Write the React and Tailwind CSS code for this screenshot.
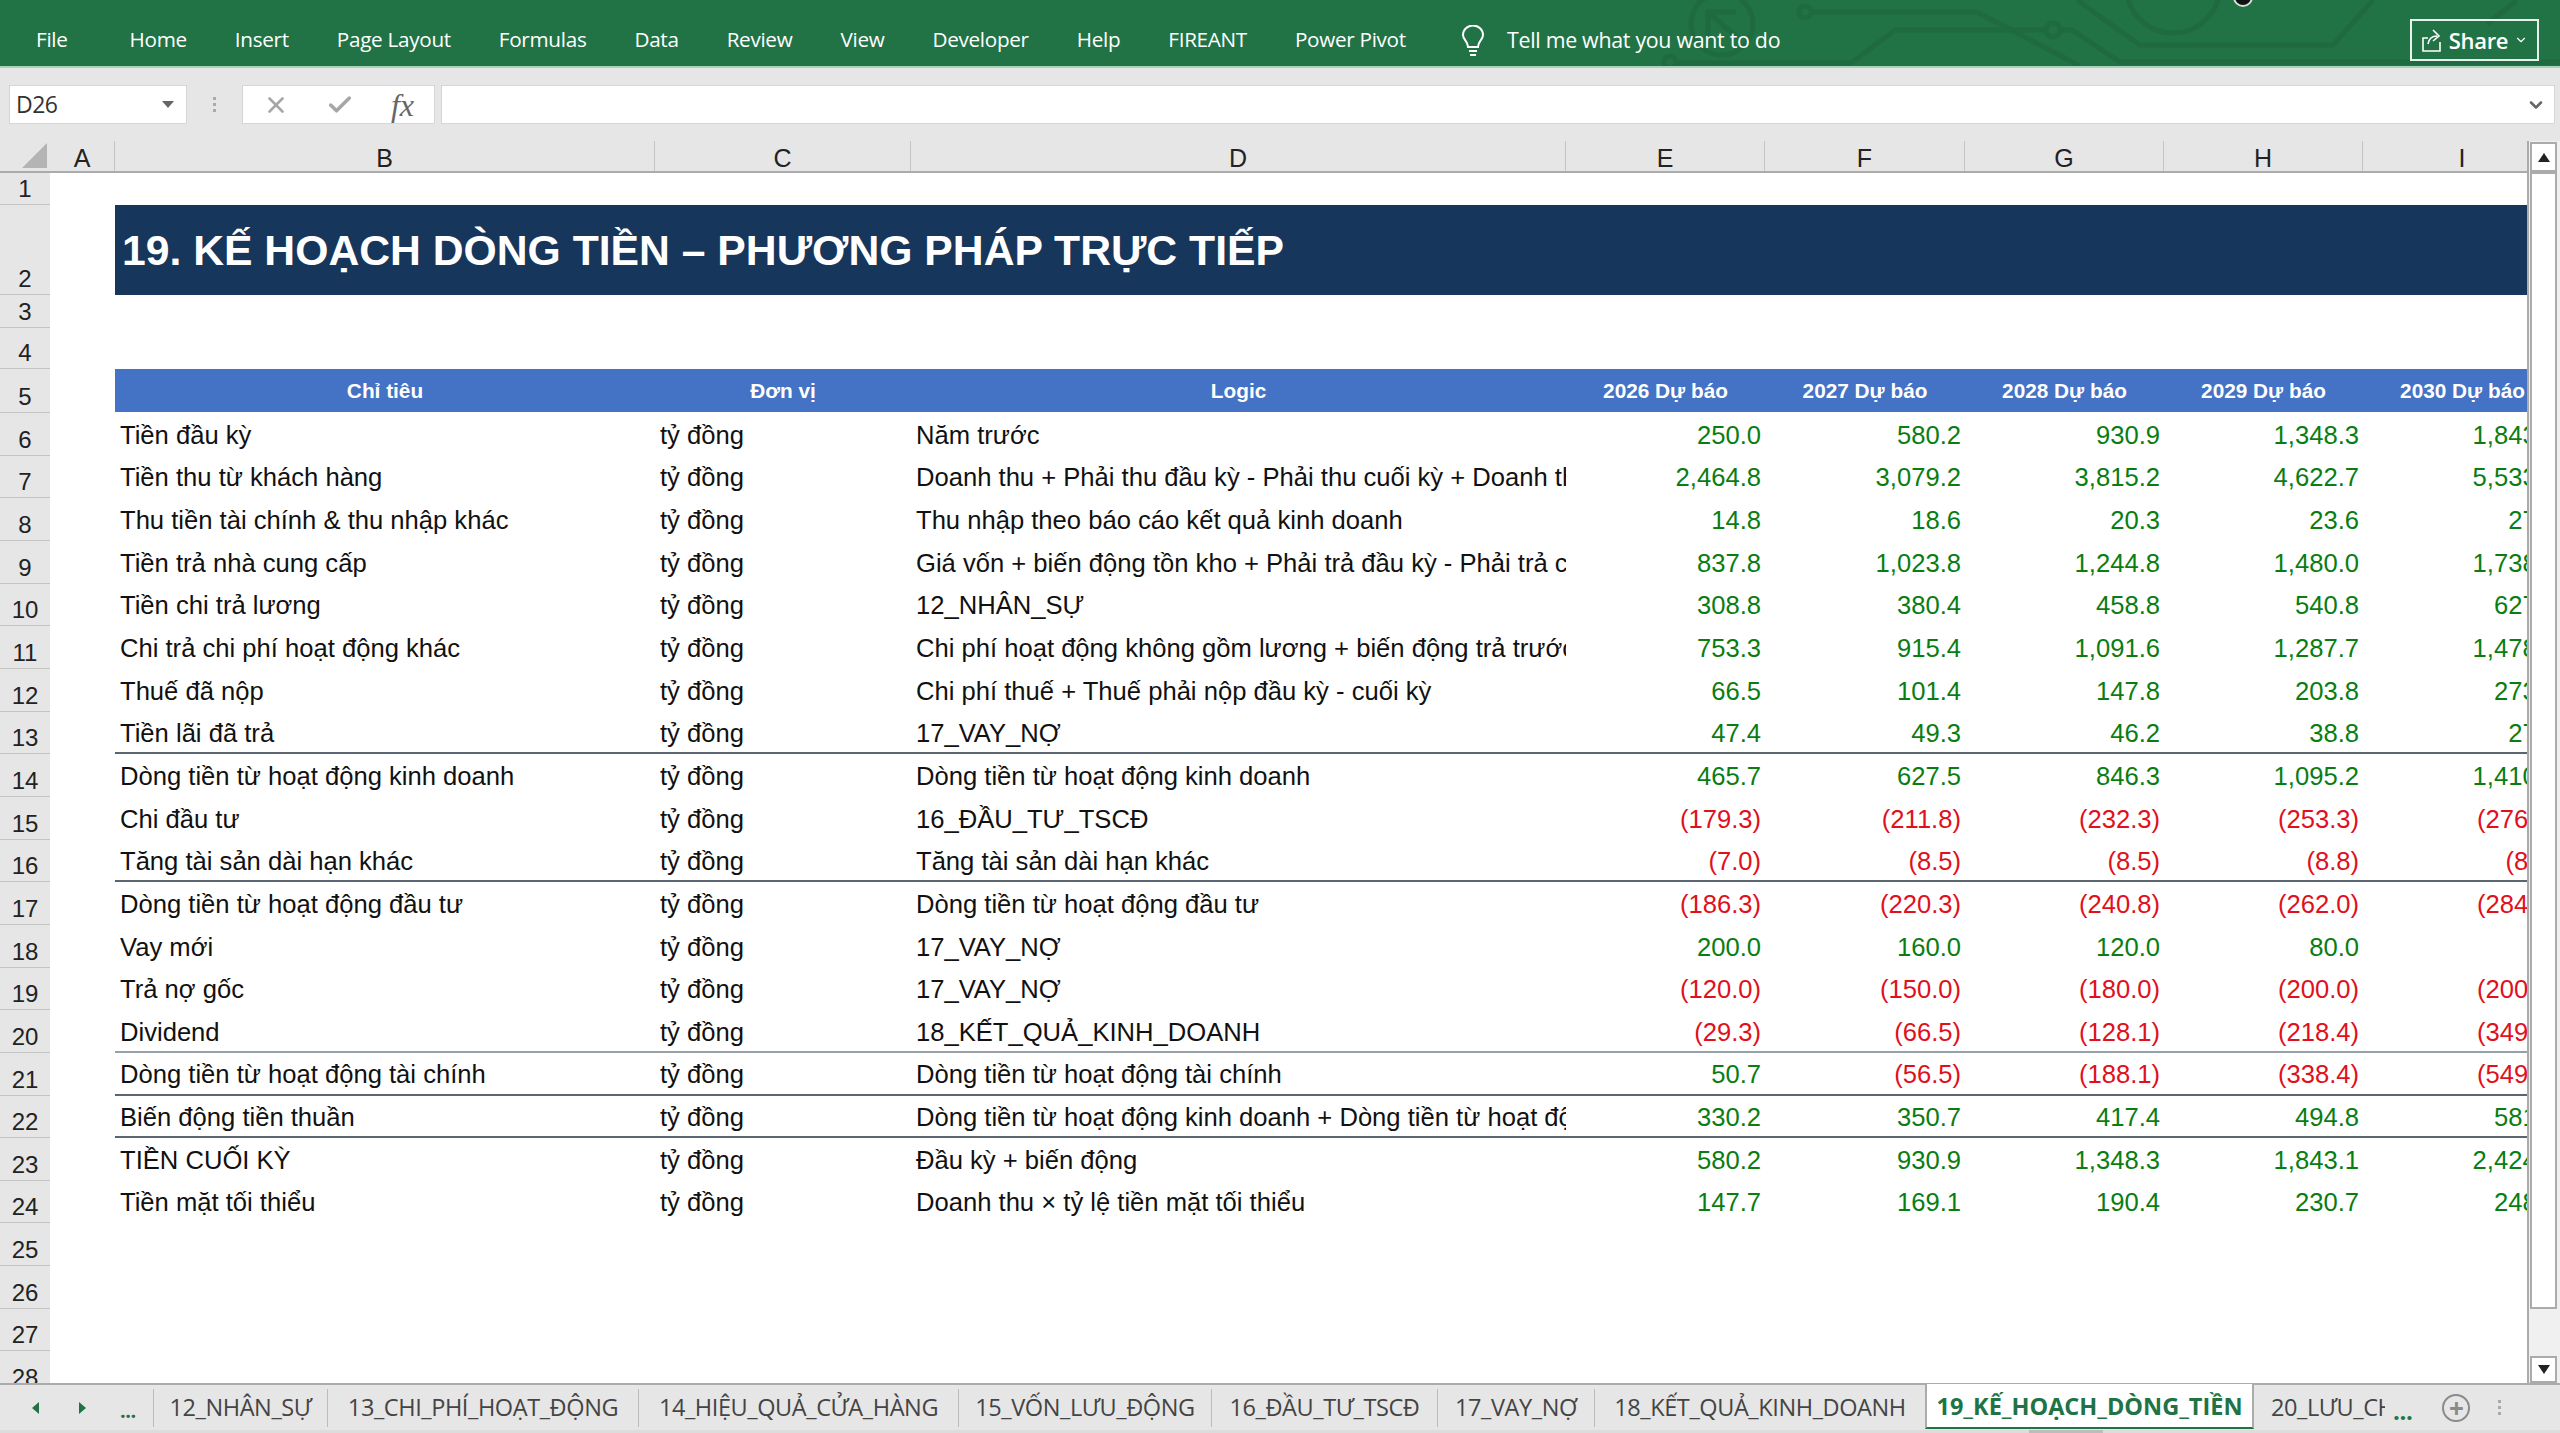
import React from "react";
import { X, Check, ChevronDown } from "lucide-react";

const ribbonTabs = ["Home", "Insert", "Page Layout", "Formulas", "Data", "Review", "View", "Developer", "Help", "FIREANT", "Power Pivot"];
const columns = [
  { name: "A", width: "w-[65px]" },
  { name: "B", width: "w-[540px]" },
  { name: "C", width: "w-[256px]" },
  { name: "D", width: "w-[655px]" },
  { name: "E", width: "w-[199px]" },
  { name: "F", width: "w-[200px]" },
  { name: "G", width: "w-[199px]" },
  { name: "H", width: "w-[199px]" },
  { name: "I", width: "w-[199px]" },
];
const headerRow = ["Chỉ tiêu", "Đơn vị", "Logic", "2026 Dự báo", "2027 Dự báo", "2028 Dự báo", "2029 Dự báo", "2030 Dự báo"];
const rows = [
  { n: 6, label: "Tiền đầu kỳ", logic: "Năm trước", v: ["250.0", "580.2", "930.9", "1,348.3", "1,843.1"] },
  { n: 7, label: "Tiền thu từ khách hàng", logic: "Doanh thu + Phải thu đầu kỳ - Phải thu cuối kỳ + Doanh thu chưa thực hiện", v: ["2,464.8", "3,079.2", "3,815.2", "4,622.7", "5,533.5"] },
  { n: 8, label: "Thu tiền tài chính & thu nhập khác", logic: "Thu nhập theo báo cáo kết quả kinh doanh", v: ["14.8", "18.6", "20.3", "23.6", "27.1"] },
  { n: 9, label: "Tiền trả nhà cung cấp", logic: "Giá vốn + biến động tồn kho + Phải trả đầu kỳ - Phải trả cuối kỳ", v: ["837.8", "1,023.8", "1,244.8", "1,480.0", "1,738.2"] },
  { n: 10, label: "Tiền chi trả lương", logic: "12_NHÂN_SỰ", v: ["308.8", "380.4", "458.8", "540.8", "627.4"] },
  { n: 11, label: "Chi trả chi phí hoạt động khác", logic: "Chi phí hoạt động không gồm lương + biến động trả trước", v: ["753.3", "915.4", "1,091.6", "1,287.7", "1,478.3"] },
  { n: 12, label: "Thuế đã nộp", logic: "Chi phí thuế + Thuế phải nộp đầu kỳ - cuối kỳ", v: ["66.5", "101.4", "147.8", "203.8", "273.6"] },
  { n: 13, label: "Tiền lãi đã trả", logic: "17_VAY_NỢ", v: ["47.4", "49.3", "46.2", "38.8", "27.2"], line: "border-[#5b6670]" },
  { n: 14, label: "Dòng tiền từ hoạt động kinh doanh", logic: "Dòng tiền từ hoạt động kinh doanh", v: ["465.7", "627.5", "846.3", "1,095.2", "1,410.4"] },
  { n: 15, label: "Chi đầu tư", logic: "16_ĐẦU_TƯ_TSCĐ", v: ["(179.3)", "(211.8)", "(232.3)", "(253.3)", "(276.0)"] },
  { n: 16, label: "Tăng tài sản dài hạn khác", logic: "Tăng tài sản dài hạn khác", v: ["(7.0)", "(8.5)", "(8.5)", "(8.8)", "(8.9)"], line: "border-[#5b6670]" },
  { n: 17, label: "Dòng tiền từ hoạt động đầu tư", logic: "Dòng tiền từ hoạt động đầu tư", v: ["(186.3)", "(220.3)", "(240.8)", "(262.0)", "(284.9)"] },
  { n: 18, label: "Vay mới", logic: "17_VAY_NỢ", v: ["200.0", "160.0", "120.0", "80.0", ""] },
  { n: 19, label: "Trả nợ gốc", logic: "17_VAY_NỢ", v: ["(120.0)", "(150.0)", "(180.0)", "(200.0)", "(200.0)"] },
  { n: 20, label: "Dividend", logic: "18_KẾT_QUẢ_KINH_DOANH", v: ["(29.3)", "(66.5)", "(128.1)", "(218.4)", "(349.3)"], line: "border-[#98a0a8]" },
  { n: 21, label: "Dòng tiền từ hoạt động tài chính", logic: "Dòng tiền từ hoạt động tài chính", v: ["50.7", "(56.5)", "(188.1)", "(338.4)", "(549.3)"], line: "border-[#5b6670]" },
  { n: 22, label: "Biến động tiền thuần", logic: "Dòng tiền từ hoạt động kinh doanh + Dòng tiền từ hoạt động đầu tư", v: ["330.2", "350.7", "417.4", "494.8", "581.2"], line: "border-[#5b6670]" },
  { n: 23, label: "TIỀN CUỐI KỲ", logic: "Đầu kỳ + biến động", v: ["580.2", "930.9", "1,348.3", "1,843.1", "2,424.3"] },
  { n: 24, label: "Tiền mặt tối thiểu", logic: "Doanh thu × tỷ lệ tiền mặt tối thiểu", v: ["147.7", "169.1", "190.4", "230.7", "248.6"] },
];
const sheetTabs = [
  { name: "12_NHÂN_SỰ", width: "w-[174px]" },
  { name: "13_CHI_PHÍ_HOẠT_ĐỘNG", width: "w-[311px]" },
  { name: "14_HIỆU_QUẢ_CỬA_HÀNG", width: "w-[320px]" },
  { name: "15_VỐN_LƯU_ĐỘNG", width: "w-[253px]" },
  { name: "16_ĐẦU_TƯ_TSCĐ", width: "w-[226px]" },
  { name: "17_VAY_NỢ", width: "w-[157px]" },
  { name: "18_KẾT_QUẢ_KINH_DOANH", width: "w-[331px]" },
];

const RowHead = ({ n, height }) => (
  <div className={`${height} w-[50px] shrink-0 bg-[#e6e6e6] border-b border-[#c4c4c4] flex items-end justify-center pb-[1px] text-[24px] leading-[28px] text-[#222]`}>
    {n}
  </div>
);

const App = () => {
  return (
    <div className="w-[2560px] h-[1433px] flex flex-col overflow-hidden bg-white font-['Liberation_Sans',Arial,sans-serif]">
      {/* ribbon */}
      <div className="relative h-[68px] shrink-0 bg-[#217346] border-b-2 border-[#a9d3b9] flex items-center pl-[36px] pt-[14px] text-white font-['Open_Sans',sans-serif] text-[20.7px] tracking-[-0.3px]">
        <svg className="absolute inset-0" width="2560" height="66" fill="none" stroke="#1f6a41" strokeWidth="5">
          <circle cx="1722" cy="24" r="31" />
          <path d="M1708 40 L1708 12 L1736 12 M1708 12 L1738 38" />
          <circle cx="1805" cy="12" r="6" />
          <path d="M1811 12 H1977 L2080 66" />
          <circle cx="1670" cy="62" r="6" />
          <path d="M1676 63 H1851 L1895 30 H2047" />
          <circle cx="2053" cy="30" r="7" />
          <path d="M2060 30 H2072 L2120 62 H2560" />
          <path d="M2077 0 L2140 45 H2333 L2373 0" />
          <circle cx="2173" cy="-14" r="47" />
          <path d="M2517 0 L2487 24" />
          <circle cx="2243" cy="-3" r="9" fill="#111" stroke="#ddd" strokeWidth="2" />
        </svg>
        <span className="relative mr-[62px] whitespace-nowrap">File</span>
        <div className="relative flex items-center gap-[48px]">
          {ribbonTabs.map((t) => (
            <span key={t} className="whitespace-nowrap">{t}</span>
          ))}
        </div>
        <svg className="absolute left-[1460px] top-[25px]" width="26" height="32" viewBox="0 0 26 32" fill="none" stroke="#fff" strokeWidth="2">
          <path d="M8 22 C8 16 3 15 3 10 A10 9.5 0 0 1 23 10 C23 15 18 16 18 22 Z" />
          <path d="M9 26 H17 M10 30 H16" />
        </svg>
        <span className="absolute left-[1507px] top-[24px] whitespace-nowrap text-[21.4px]">Tell me what you want to do</span>
        <div className="absolute left-[2410px] top-[19px] w-[129px] h-[42px] border-2 border-[#e8f1ec] flex items-center justify-center gap-[6px] font-semibold text-[22px]">
          <svg width="22" height="26" viewBox="0 0 22 26" fill="none" stroke="#fff" strokeWidth="1.6">
            <path d="M7 11 H2 V24 H19 V15" />
            <path d="M7 17 C8 11 11 9 16 9 M12 3 L18 9 L12 14" />
          </svg>
          <span>Share</span>
          <ChevronDown size={14} strokeWidth={2} />
        </div>
      </div>

      {/* formula bar */}
      <div className="h-[73px] shrink-0 bg-[#e6e6e6] flex items-center pl-[9px] pr-[5px]">
        <div className="w-[178px] h-[39px] bg-white border border-[#d6d6d6] flex items-center justify-between px-[6px] font-['Open_Sans',sans-serif] text-[23px] tracking-[-0.5px] text-[#333]">
          <span>D26</span>
          <div className="w-0 h-0 mr-[6px] border-x-[6px] border-x-transparent border-t-[7px] border-t-[#666]" />
        </div>
        <div className="w-[55px] flex flex-col items-center gap-[3px]">
          <div className="w-[3px] h-[3px] bg-[#aaa]" />
          <div className="w-[3px] h-[3px] bg-[#aaa]" />
          <div className="w-[3px] h-[3px] bg-[#aaa]" />
        </div>
        <div className="w-[193px] h-[39px] bg-white border border-[#d6d6d6] flex items-center justify-center gap-[37px] text-[#a6a6a6]">
          <X size={26} strokeWidth={2.4} />
          <Check size={28} strokeWidth={3} />
          <span className="font-['Liberation_Serif',serif] italic text-[32px] leading-none text-[#666]">fx</span>
        </div>
        <div className="ml-[6px] flex-1 h-[39px] bg-white border border-[#d6d6d6] flex items-center justify-end pr-[8px]">
          <ChevronDown size={20} strokeWidth={3} className="text-[#666]" />
        </div>
      </div>

      {/* sheet area */}
      <div className="flex-1 min-h-0 flex">
        <div className="w-[2527px] shrink-0 overflow-hidden text-[25.6px] text-[#111]">
          {/* column letters */}
          <div className="flex h-[32px] w-[2600px] bg-[#e6e6e6] border-b-2 border-[#ababab]">
            <div className="w-[50px] shrink-0 flex items-end justify-end">
              <div className="w-0 h-0 mr-[3px] mb-[3px] border-l-[25px] border-l-transparent border-b-[25px] border-b-[#b4b4b4]" />
            </div>
            {columns.map((c) => (
              <div key={c.name} className={`${c.width} shrink-0 border-r border-[#c4c4c4] flex items-center justify-center pt-[5px] text-[25px] leading-none text-[#222]`}>
                {c.name}
              </div>
            ))}
          </div>

          {/* title rows */}
          <div className="flex"><RowHead n={1} height="h-[32px]" /></div>
          <div className="flex">
            <RowHead n={2} height="h-[90px]" />
            <div className="ml-[65px] flex-1 h-[90px] bg-[#16365c] flex items-center pl-[7px] text-white font-bold text-[42.7px] whitespace-nowrap">
              19. KẾ HOẠCH DÒNG TIỀN – PHƯƠNG PHÁP TRỰC TIẾP
            </div>
          </div>
          <div className="flex"><RowHead n={3} height="h-[33px]" /></div>
          <div className="flex"><RowHead n={4} height="h-[41px]" /></div>

          {/* table header */}
          <div className="flex w-[2600px]">
            <RowHead n={5} height="h-[44px]" />
            <div className={`${columns[0].width} shrink-0`} />
            {headerRow.map((h, i) => (
              <div key={h} className={`${columns[i + 1].width} shrink-0 h-[43px] bg-[#4472c4] flex items-center justify-center text-white font-bold text-[20.8px] whitespace-nowrap`}>
                {h}
              </div>
            ))}
          </div>

          {/* data rows */}
          {rows.map((r) => (
            <div key={r.n} className="flex w-[2600px]">
              <RowHead n={r.n} height="h-[42.66px]" />
              <div className={`${columns[0].width} shrink-0`} />
              <div className={`flex h-[42.66px] pt-[3px] border-b-2 ${r.line || "border-transparent"}`}>
                <div className={`${columns[1].width} shrink-0 pl-[5px] flex items-center whitespace-nowrap overflow-hidden`}>{r.label}</div>
                <div className={`${columns[2].width} shrink-0 pl-[5px] flex items-center whitespace-nowrap overflow-hidden`}>tỷ đồng</div>
                <div className={`${columns[3].width} shrink-0 pl-[5px] flex items-center whitespace-nowrap overflow-hidden`}>{r.logic}</div>
                {r.v.map((val, i) => (
                  <div
                    key={i}
                    className={`${columns[i + 4].width} shrink-0 pr-[4px] flex items-center justify-end whitespace-nowrap ${val.startsWith("(") ? "text-[#e0101c]" : "text-[#0a7d12]"}`}
                  >
                    {val}
                  </div>
                ))}
              </div>
            </div>
          ))}

          {/* empty rows */}
          {[25, 26, 27, 28].map((n) => (
            <div key={n} className="flex"><RowHead n={n} height="h-[42.66px]" /></div>
          ))}
        </div>

        {/* vertical scrollbar */}
        <div className="w-[33px] shrink-0 bg-[#f0f0f0] border-l-2 border-[#ababab] flex flex-col pl-[1px] pr-[3px] pt-[1px]">
          <div className="h-[30px] bg-white border-2 border-[#ababab] flex items-center justify-center shrink-0">
            <div className="w-0 h-0 border-x-[6px] border-x-transparent border-b-[9px] border-b-[#222]" />
          </div>
          <div className="h-[1137px] bg-white border-2 border-[#ababab] shrink-0" />
          <div className="mt-auto h-[27px] bg-white border-2 border-[#ababab] flex items-center justify-center shrink-0">
            <div className="w-0 h-0 border-x-[6px] border-x-transparent border-t-[9px] border-t-[#222]" />
          </div>
        </div>
      </div>

      {/* sheet tabs */}
      <div className="h-[47px] shrink-0 bg-[#e6e6e6] border-t-2 border-[#ababab] flex items-center font-['Open_Sans',sans-serif] text-[23.5px] text-[#444] tracking-[-0.4px] whitespace-nowrap">
        <div className="w-[153px] shrink-0 flex items-center pl-[32px] text-[#217346]">
          <div className="w-0 h-0 border-y-[6px] border-y-transparent border-r-[7px] border-r-[#217346]" />
          <div className="ml-[40px] w-0 h-0 border-y-[6px] border-y-transparent border-l-[7px] border-l-[#217346]" />
          <span className="ml-[34px] font-bold text-[20px] mt-[6px]">...</span>
        </div>
        {sheetTabs.map((t) => (
          <div key={t.name} className={`${t.width} h-[38px] shrink-0 border-l border-[#bcbcbc] flex items-center justify-center`}>
            {t.name}
          </div>
        ))}
        <div className="w-[329px] h-full shrink-0 bg-white border-x-2 border-[#ababab] border-b-2 border-b-[#217346] -mt-[2px] pt-[2px] flex items-center justify-center text-[#217346] font-bold tracking-[0px]">
          19_KẾ_HOẠCH_DÒNG_TIỀN
        </div>
        <div className="w-[131px] shrink-0 pl-[17px] overflow-hidden">20_LƯU_CHUYỂN</div>
        <span className="ml-[8px] font-bold text-[24px] text-[#217346] mt-[6px]">...</span>
        <div className="ml-[30px] w-[28px] h-[28px] rounded-full border-2 border-[#8a8a8a] flex items-center justify-center text-[#8a8a8a] text-[26px] font-bold leading-none">+</div>
        <div className="ml-[28px] flex flex-col gap-[3px]">
          <div className="w-[3px] h-[3px] bg-[#aaa]" />
          <div className="w-[3px] h-[3px] bg-[#aaa]" />
          <div className="w-[3px] h-[3px] bg-[#aaa]" />
        </div>
      </div>
      <div className="h-[3px] shrink-0 bg-[#dcdcdc] pl-[2029px]">
        <div className="w-[74px] h-full bg-[#bdbdbd]" />
      </div>
    </div>
  );
};

export default App;
